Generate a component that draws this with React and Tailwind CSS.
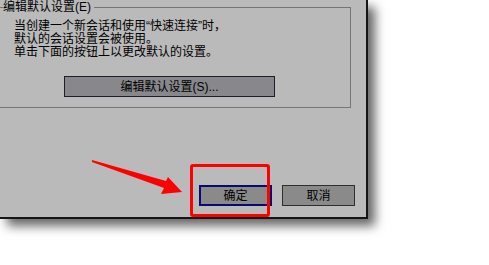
import React from 'react';

const font = { fontFamily: '"Liberation Sans", "Noto Sans CJK SC", sans-serif' };

function DialogButton({ children, primary }) {
  return (
    <button
      type="button"
      className={
        primary
          ? 'w-[73px] h-[21px] bg-[#8a8a8a] border-2 border-[#0a0a6e] text-[12px] leading-none text-black'
          : 'w-[73px] h-[21px] bg-[#8a8a8a] border border-[#2e2e2e] text-[12px] leading-none text-black'
      }
    >
      {children}
    </button>
  );
}

export default function App() {
  return (
    <div
      className="relative w-[489px] h-[265px] bg-white overflow-hidden"
      style={font}
    >
      <div className="w-[368px] h-[219px] bg-[#bababa] border-r-2 border-b-2 border-[#151515] shadow-[7px_7px_10px_0px_rgba(0,0,0,0.6)] flex flex-col">
        <fieldset className="ml-[-10px] w-[361px] h-[108px] border border-[#767676] pl-[12px] pr-0 pb-0 m-0">
          <legend className="px-0 pr-[3px] text-[12px] leading-[14px] text-black">
            编辑默认设置(E)
          </legend>
          <div className="ml-[11px] mt-[6px] text-[12px] leading-[13px] text-black">
            <p>当创建一个新会话和使用“快速连接”时，</p>
            <p>默认的会话设置会被使用。</p>
            <p>单击下面的按钮上以更改默认的设置。</p>
          </div>
          <button
            type="button"
            className="mt-[17px] ml-[61px] w-[211px] h-[21px] bg-[#88888c] border border-[#1c1f2a] text-[12px] leading-none text-black"
          >
            编辑默认设置(S)...
          </button>
        </fieldset>

        <div className="mt-auto mb-[11px] mr-[11px] flex justify-end gap-[10px]">
          <DialogButton primary>确定</DialogButton>
          <DialogButton>取消</DialogButton>
        </div>
      </div>

      {/* annotation: red box + arrow */}
      <div className="absolute left-[190px] top-[164px] w-[80px] h-[53px] border-[3px] border-[#ff0000] rounded-[3px]" />
      <svg
        className="absolute left-0 top-0 pointer-events-none"
        width="489"
        height="265"
        viewBox="0 0 489 265"
      >
        <polygon
          points="92,160 166,181 168,177 182,192 161,194 164,188 92,162"
          fill="#ff0000"
        />
      </svg>
    </div>
  );
}
